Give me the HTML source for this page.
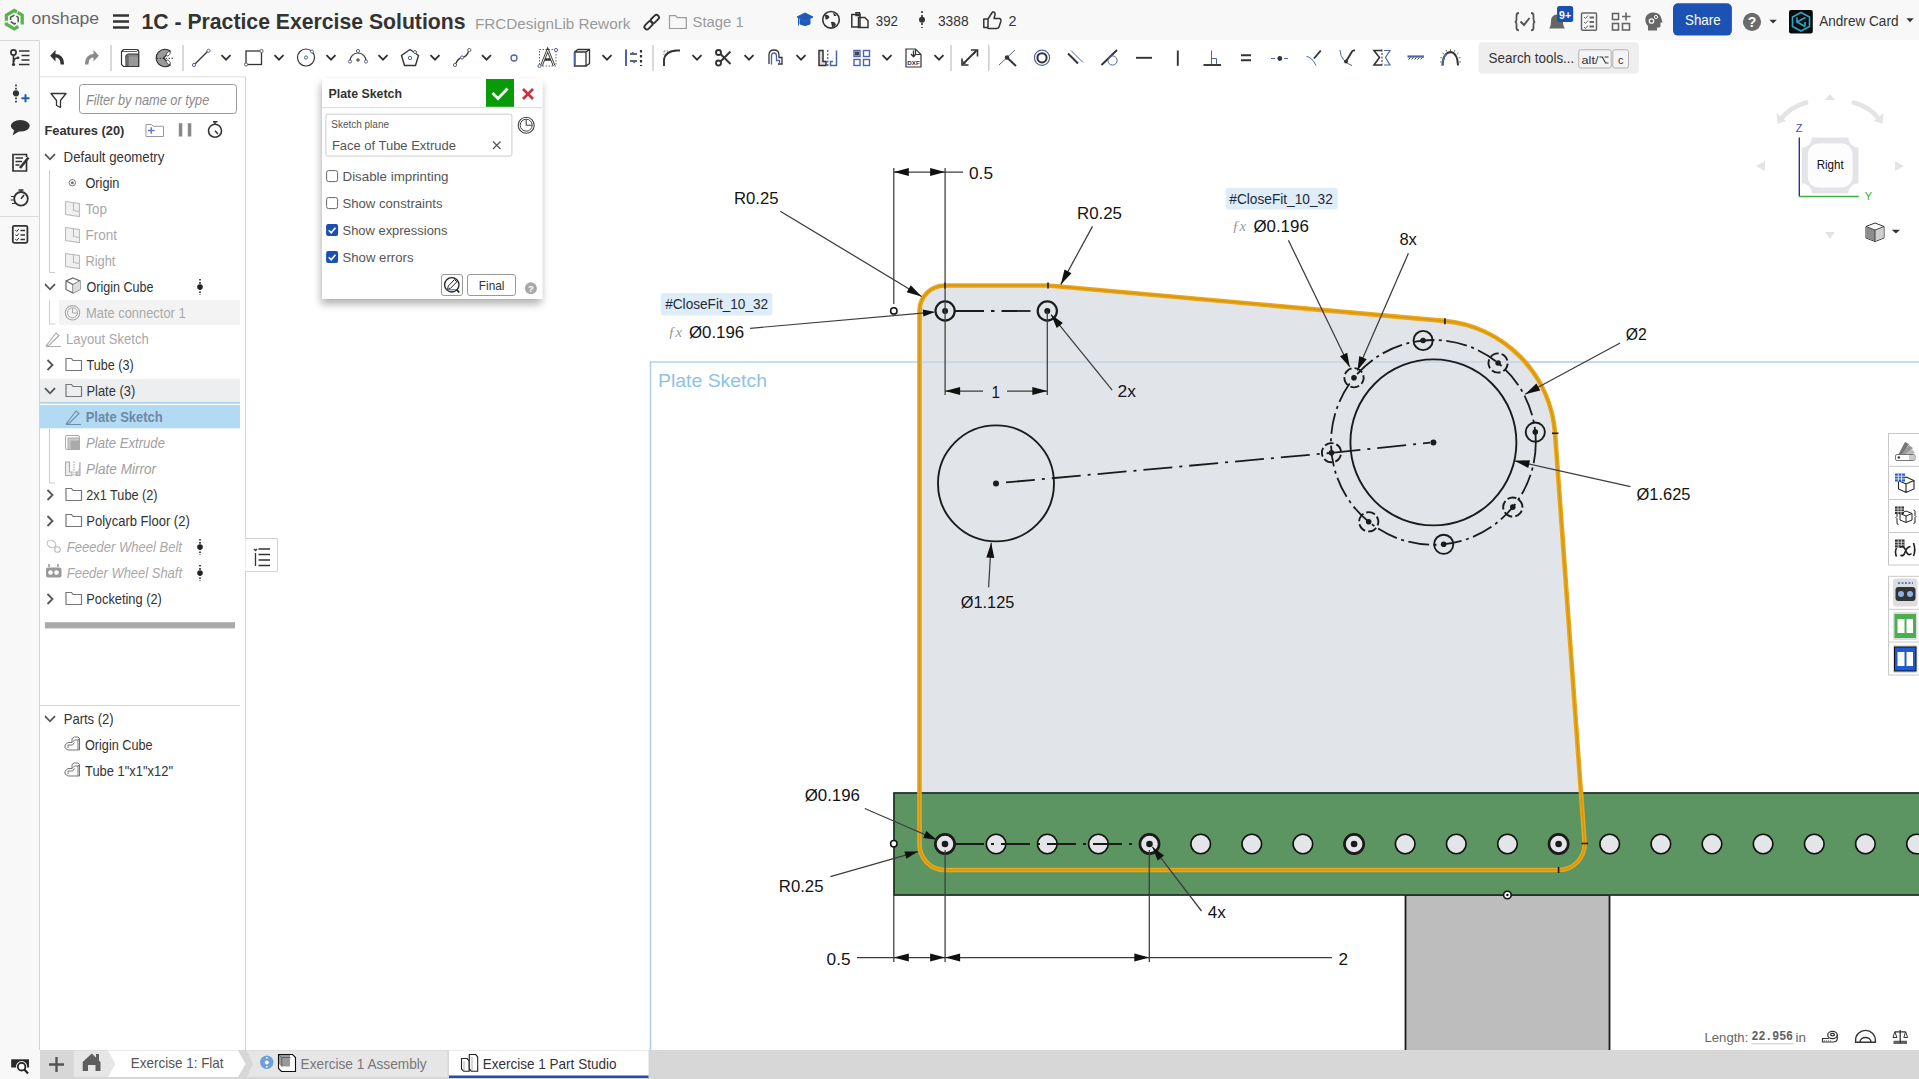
<!DOCTYPE html>
<html><head><meta charset="utf-8"><title>Onshape</title>
<style>html,body{margin:0;padding:0;background:#fff;overflow:hidden}svg{display:block}text{font-family:"Liberation Sans",sans-serif}</style>
</head><body>
<svg width="1919" height="1079" viewBox="0 0 1919 1079" font-family="Liberation Sans">
<rect x="0" y="0" width="1919" height="1079" fill="#ffffff"/>
<rect x="0" y="0" width="1919" height="40" fill="#f8f8f8"/>
<rect x="0" y="40" width="40" height="1039" fill="#f8f8f8"/>
<path d="M0 40.5 H39.5 V77" fill="none" stroke="#d6d6d6"/>
<g id="viewport"><path d="M650.5 1050 V362 H1919" fill="none" stroke="#afd3ec" stroke-width="1.7"/>
<text x="658" y="386.5" font-size="18" fill="#8cc3e8" textLength="109" lengthAdjust="spacingAndGlyphs">Plate Sketch</text>
<path d="M919.5 311 A25.5 25.5 0 0 1 945 285.5 L1048 285.5 L1444.25 320.88 A122 122 0 0 1 1555.08 433.63 L1584.53 842.13 A26 26 0 0 1 1558.6 870 L945 870 A25.5 25.5 0 0 1 919.5 844.5 Z" fill="#e1e4e8"/>
<path d="M919 362 H1590" stroke="#c5d6e3" stroke-width="1.3"/>
<rect x="1405.5" y="895" width="204" height="160" fill="#bdbdbd" stroke="#1b1b1b" stroke-width="1.8"/>
<rect x="894" y="793" width="1030" height="102" fill="#5c9562" stroke="#22362a" stroke-width="1.8"/>
<circle cx="945.0" cy="844" r="9.8" fill="#e3e5e9" stroke="#111" stroke-width="1.6"/>
<circle cx="996.1" cy="844" r="9.8" fill="#e3e5e9" stroke="#111" stroke-width="1.6"/>
<circle cx="1047.3" cy="844" r="9.8" fill="#e3e5e9" stroke="#111" stroke-width="1.6"/>
<circle cx="1098.4" cy="844" r="9.8" fill="#e3e5e9" stroke="#111" stroke-width="1.6"/>
<circle cx="1149.5" cy="844" r="9.8" fill="#e3e5e9" stroke="#111" stroke-width="1.6"/>
<circle cx="1200.7" cy="844" r="9.8" fill="#e3e5e9" stroke="#111" stroke-width="1.6"/>
<circle cx="1251.8" cy="844" r="9.8" fill="#e3e5e9" stroke="#111" stroke-width="1.6"/>
<circle cx="1302.9" cy="844" r="9.8" fill="#e3e5e9" stroke="#111" stroke-width="1.6"/>
<circle cx="1354.1" cy="844" r="9.8" fill="#e3e5e9" stroke="#111" stroke-width="1.6"/>
<circle cx="1405.2" cy="844" r="9.8" fill="#e3e5e9" stroke="#111" stroke-width="1.6"/>
<circle cx="1456.3" cy="844" r="9.8" fill="#e3e5e9" stroke="#111" stroke-width="1.6"/>
<circle cx="1507.5" cy="844" r="9.8" fill="#e3e5e9" stroke="#111" stroke-width="1.6"/>
<circle cx="1558.6" cy="844" r="9.8" fill="#e3e5e9" stroke="#111" stroke-width="1.6"/>
<circle cx="1609.7" cy="844" r="9.8" fill="#e3e5e9" stroke="#111" stroke-width="1.6"/>
<circle cx="1660.9" cy="844" r="9.8" fill="#e3e5e9" stroke="#111" stroke-width="1.6"/>
<circle cx="1712.0" cy="844" r="9.8" fill="#e3e5e9" stroke="#111" stroke-width="1.6"/>
<circle cx="1763.1" cy="844" r="9.8" fill="#e3e5e9" stroke="#111" stroke-width="1.6"/>
<circle cx="1814.3" cy="844" r="9.8" fill="#e3e5e9" stroke="#111" stroke-width="1.6"/>
<circle cx="1865.4" cy="844" r="9.8" fill="#e3e5e9" stroke="#111" stroke-width="1.6"/>
<circle cx="1916.5" cy="844" r="9.8" fill="#e3e5e9" stroke="#111" stroke-width="1.6"/>
<circle cx="893.8" cy="843.8" r="3.2" fill="#fff" stroke="#111" stroke-width="1.5"/>
<circle cx="1507.4" cy="895" r="3.8" fill="#fff" stroke="#111" stroke-width="1.6"/>
<circle cx="1507.4" cy="895" r="1.2" fill="#111"/>
<path d="M955 844 H1139" stroke="#1b1b1b" stroke-width="1.8" stroke-dasharray="29 7 3 7"/>
<circle cx="945.0" cy="844" r="9.6" fill="none" stroke="#1b1b1b" stroke-width="2.6"/>
<circle cx="945.0" cy="844" r="3.3" fill="#1b1b1b"/>
<circle cx="1149.5" cy="844" r="9.6" fill="none" stroke="#1b1b1b" stroke-width="2.6"/>
<circle cx="1149.5" cy="844" r="3.3" fill="#1b1b1b"/>
<circle cx="1354.1" cy="844" r="9.6" fill="none" stroke="#1b1b1b" stroke-width="2.6"/>
<circle cx="1354.1" cy="844" r="3.3" fill="#1b1b1b"/>
<circle cx="1558.6" cy="844" r="9.6" fill="none" stroke="#1b1b1b" stroke-width="2.6"/>
<circle cx="1558.6" cy="844" r="3.3" fill="#1b1b1b"/>
<path d="M919.5 311 A25.5 25.5 0 0 1 945 285.5 L1048 285.5 L1444.25 320.88 A122 122 0 0 1 1555.08 433.63 L1584.53 842.13 A26 26 0 0 1 1558.6 870 L945 870 A25.5 25.5 0 0 1 919.5 844.5 Z" fill="none" stroke="#e8a61e" stroke-width="4.6"/>
<path d="M919.5 311 A25.5 25.5 0 0 1 945 285.5 L1048 285.5 L1444.25 320.88 A122 122 0 0 1 1555.08 433.63 L1584.53 842.13 A26 26 0 0 1 1558.6 870 L945 870 A25.5 25.5 0 0 1 919.5 844.5 Z" fill="none" stroke="#d99604" stroke-width="1.4"/>
<path d="M1048 282.5 V288.5" stroke="#1b1b1b" stroke-width="1.6"/>
<path d="M1444.9 318.2 V324.2" stroke="#1b1b1b" stroke-width="1.6"/>
<path d="M1558.6 867 V873" stroke="#1b1b1b" stroke-width="1.6"/>
<path d="M945 282.5 V288.5" stroke="#1b1b1b" stroke-width="1.6"/>
<path d="M1552 433.3 H1558.5" stroke="#1b1b1b" stroke-width="1.6"/>
<path d="M1581.6 843.5 H1588.1" stroke="#1b1b1b" stroke-width="1.6"/>
<circle cx="945.1" cy="311" r="9.6" fill="none" stroke="#1b1b1b" stroke-width="2.2"/>
<circle cx="945.1" cy="311" r="3" fill="#1b1b1b"/>
<circle cx="1047.3" cy="311" r="9.6" fill="none" stroke="#1b1b1b" stroke-width="2.2"/>
<circle cx="1047.3" cy="311" r="3" fill="#1b1b1b"/>
<path d="M955 311 H1037" stroke="#1b1b1b" stroke-width="1.8" stroke-dasharray="29 7 3.5 7"/>
<circle cx="1433.4" cy="442.4" r="83" fill="none" stroke="#1b1b1b" stroke-width="1.9"/>
<circle cx="1433.4" cy="442.4" r="3" fill="#1b1b1b"/>
<circle cx="1433.4" cy="442.4" r="102.4" fill="none" stroke="#1b1b1b" stroke-width="1.8" stroke-dasharray="21 4.5 3 4.5"/>
<circle cx="1535.3" cy="432.1" r="9.6" fill="none" stroke="#1b1b1b" stroke-width="1.9"/>
<circle cx="1535.3" cy="432.1" r="2.8" fill="#1b1b1b"/>
<circle cx="1498.1" cy="363.0" r="9.6" fill="none" stroke="#1b1b1b" stroke-width="1.9" stroke-dasharray="9 3" transform="rotate(-140.8 1498.1 363.0)"/>
<circle cx="1498.1" cy="363.0" r="2.8" fill="#1b1b1b"/>
<circle cx="1423.1" cy="340.5" r="9.6" fill="none" stroke="#1b1b1b" stroke-width="1.9"/>
<circle cx="1423.1" cy="340.5" r="2.8" fill="#1b1b1b"/>
<circle cx="1354.0" cy="377.7" r="9.6" fill="none" stroke="#1b1b1b" stroke-width="1.9" stroke-dasharray="9 3" transform="rotate(-230.8 1354.0 377.7)"/>
<circle cx="1354.0" cy="377.7" r="2.8" fill="#1b1b1b"/>
<circle cx="1331.5" cy="452.7" r="9.6" fill="none" stroke="#1b1b1b" stroke-width="1.9" stroke-dasharray="9 3" transform="rotate(-275.8 1331.5 452.7)"/>
<circle cx="1331.5" cy="452.7" r="2.8" fill="#1b1b1b"/>
<circle cx="1368.7" cy="521.8" r="9.6" fill="none" stroke="#1b1b1b" stroke-width="1.9" stroke-dasharray="9 3" transform="rotate(-320.8 1368.7 521.8)"/>
<circle cx="1368.7" cy="521.8" r="2.8" fill="#1b1b1b"/>
<circle cx="1443.7" cy="544.3" r="9.6" fill="none" stroke="#1b1b1b" stroke-width="1.9"/>
<circle cx="1443.7" cy="544.3" r="2.8" fill="#1b1b1b"/>
<circle cx="1512.8" cy="507.1" r="9.6" fill="none" stroke="#1b1b1b" stroke-width="1.9" stroke-dasharray="9 3" transform="rotate(-410.8 1512.8 507.1)"/>
<circle cx="1512.8" cy="507.1" r="2.8" fill="#1b1b1b"/>
<circle cx="996" cy="483.4" r="58" fill="none" stroke="#1b1b1b" stroke-width="1.9"/>
<circle cx="996" cy="483.4" r="3" fill="#1b1b1b"/>
<path d="M1006 482.4 L1331.5 452.8" stroke="#1b1b1b" stroke-width="1.8" stroke-dasharray="29 7 3 7"/>
<path d="M1331.5 452.8 L1430 442.7" stroke="#1b1b1b" stroke-width="1.8" stroke-dasharray="29 7 3 7"/>
<path d="M893.8 168 L893.8 304" stroke="#3c3c3c" stroke-width="1.25" fill="none"/>
<path d="M945.1 168 L945.1 395" stroke="#3c3c3c" stroke-width="1.25" fill="none"/>
<path d="M893.8 172 L963 172" stroke="#3c3c3c" stroke-width="1.25" fill="none"/>
<path d="M893.8 172.0 L908.8 168.0 L908.8 176.0 Z" fill="#111"/>
<path d="M945.1 172.0 L930.1 176.0 L930.1 168.0 Z" fill="#111"/>
<circle cx="893.8" cy="310.9" r="3.2" fill="#fff" stroke="#111" stroke-width="1.5"/>
<text x="969" y="178.7" font-size="16.5" fill="#141414" textLength="24" lengthAdjust="spacingAndGlyphs">0.5</text>
<path d="M780.3 211.2 L921.6 296.5" stroke="#3c3c3c" stroke-width="1.25" fill="none"/>
<path d="M921.6 296.5 L906.7 292.2 L910.8 285.3 Z" fill="#111"/>
<text x="734" y="203.8" font-size="16.5" fill="#141414" textLength="44.5" lengthAdjust="spacingAndGlyphs">R0.25</text>
<path d="M750.1 328.3 L933.6 312.2" stroke="#3c3c3c" stroke-width="1.2" fill="none"/>
<path d="M935.0 312.0 L923.4 316.5 L922.7 309.6 Z" fill="#111"/>
<path d="M1047.3 311 L1047.3 395" stroke="#3c3c3c" stroke-width="1.25" fill="none"/>
<path d="M945.1 391 L983 391" stroke="#3c3c3c" stroke-width="1.25" fill="none"/>
<path d="M1007 391 L1047.3 391" stroke="#3c3c3c" stroke-width="1.25" fill="none"/>
<path d="M945.1 391.0 L960.1 387.0 L960.1 395.0 Z" fill="#111"/>
<path d="M1047.3 391.0 L1032.3 395.0 L1032.3 387.0 Z" fill="#111"/>
<text x="991.5" y="397.5" font-size="16.5" fill="#141414" textLength="8.5" lengthAdjust="spacingAndGlyphs">1</text>
<path d="M1112.2 390.1 L1051 314.6" stroke="#3c3c3c" stroke-width="1.25" fill="none"/>
<path d="M1051.0 314.6 L1062.9 323.0 L1056.7 328.0 Z" fill="#111"/>
<text x="1117.5" y="397.1" font-size="16.5" fill="#141414" textLength="18.4" lengthAdjust="spacingAndGlyphs">2x</text>
<path d="M1092.5 226.4 L1060.8 284.6" stroke="#3c3c3c" stroke-width="1.25" fill="none"/>
<path d="M1060.8 284.6 L1064.5 269.5 L1071.5 273.3 Z" fill="#111"/>
<text x="1077" y="219" font-size="16.5" fill="#141414" textLength="45" lengthAdjust="spacingAndGlyphs">R0.25</text>
<path d="M1288.4 240.2 L1349.7 367.1" stroke="#3c3c3c" stroke-width="1.25" fill="none"/>
<path d="M1349.7 367.1 L1340.0 356.2 L1347.2 352.8 Z" fill="#111"/>
<text x="1253.4" y="231.9" font-size="17" fill="#141414" textLength="55.4" lengthAdjust="spacingAndGlyphs">Ø0.196</text>
<path d="M1408.4 253.3 L1357.4 370.4" stroke="#3c3c3c" stroke-width="1.25" fill="none"/>
<path d="M1357.4 370.4 L1359.3 356.0 L1366.7 359.2 Z" fill="#111"/>
<text x="1399.4" y="245.2" font-size="16.5" fill="#141414" textLength="17.5" lengthAdjust="spacingAndGlyphs">8x</text>
<path d="M1620.1 343 L1525.1 394.2" stroke="#3c3c3c" stroke-width="1.25" fill="none"/>
<path d="M1525.1 394.2 L1536.4 383.6 L1540.2 390.6 Z" fill="#111"/>
<text x="1625.8" y="340.3" font-size="17" fill="#141414" textLength="21" lengthAdjust="spacingAndGlyphs">Ø2</text>
<path d="M1630.4 486.6 L1514.5 460.8" stroke="#3c3c3c" stroke-width="1.25" fill="none"/>
<path d="M1514.5 460.8 L1530.0 460.2 L1528.3 468.0 Z" fill="#111"/>
<text x="1636.5" y="499.9" font-size="17" fill="#141414" textLength="54" lengthAdjust="spacingAndGlyphs">Ø1.625</text>
<path d="M988.6 587.2 L991.2 542.7" stroke="#3c3c3c" stroke-width="1.25" fill="none"/>
<path d="M991.2 542.7 L994.3 557.9 L986.3 557.4 Z" fill="#111"/>
<text x="960.8" y="608.3" font-size="17" fill="#141414" textLength="53.5" lengthAdjust="spacingAndGlyphs">Ø1.125</text>
<path d="M864.8 808.5 L936.7 839.7" stroke="#3c3c3c" stroke-width="1.25" fill="none"/>
<path d="M936.7 839.7 L923.3 838.0 L926.3 831.0 Z" fill="#111"/>
<text x="804.7" y="800.6" font-size="17" fill="#141414" textLength="55.3" lengthAdjust="spacingAndGlyphs">Ø0.196</text>
<path d="M830.4 876.6 L917.9 851.6" stroke="#3c3c3c" stroke-width="1.25" fill="none"/>
<path d="M917.9 851.6 L906.4 858.8 L904.4 851.5 Z" fill="#111"/>
<text x="778.8" y="892" font-size="16.5" fill="#141414" textLength="44.7" lengthAdjust="spacingAndGlyphs">R0.25</text>
<path d="M1201.5 911 L1152.4 846.9" stroke="#3c3c3c" stroke-width="1.25" fill="none"/>
<path d="M1152.4 846.9 L1164.1 855.6 L1157.7 860.4 Z" fill="#111"/>
<text x="1207.8" y="917.9" font-size="16.5" fill="#141414" textLength="18" lengthAdjust="spacingAndGlyphs">4x</text>
<path d="M893.8 895 L893.8 962" stroke="#3c3c3c" stroke-width="1.25" fill="none"/>
<path d="M945.1 850 L945.1 962" stroke="#3c3c3c" stroke-width="1.25" fill="none"/>
<path d="M1149.3 850 L1149.3 962" stroke="#3c3c3c" stroke-width="1.25" fill="none"/>
<path d="M857 957.6 L1332 957.6" stroke="#3c3c3c" stroke-width="1.25" fill="none"/>
<path d="M893.8 957.6 L908.8 953.6 L908.8 961.6 Z" fill="#111"/>
<path d="M945.1 957.6 L930.1 961.6 L930.1 953.6 Z" fill="#111"/>
<path d="M945.1 957.6 L960.1 953.6 L960.1 961.6 Z" fill="#111"/>
<path d="M1149.3 957.6 L1134.3 961.6 L1134.3 953.6 Z" fill="#111"/>
<text x="826.6" y="964.8" font-size="16.5" fill="#141414" textLength="24" lengthAdjust="spacingAndGlyphs">0.5</text>
<text x="1338.5" y="964.8" font-size="16.5" fill="#141414" textLength="9.5" lengthAdjust="spacingAndGlyphs">2</text>
<rect x="660.8" y="293.1" width="111.6" height="22.3" rx="3" fill="#deedf8"/>
<text x="665.2" y="309.4" font-size="14" fill="#1d2a38" textLength="103" lengthAdjust="spacingAndGlyphs">#CloseFit_10_32</text>
<text x="668" y="337" font-size="15" fill="#999" style="font-family:Liberation Serif" font-style="italic">ƒx</text>
<text x="688.9" y="337.6" font-size="17" fill="#141414" textLength="55.3" lengthAdjust="spacingAndGlyphs">Ø0.196</text>
<rect x="1225.6" y="187.7" width="112.1" height="21.8" rx="3" fill="#deedf8"/>
<text x="1229.3" y="203.6" font-size="14" fill="#1d2a38" textLength="103.5" lengthAdjust="spacingAndGlyphs">#CloseFit_10_32</text>
<text x="1232" y="231" font-size="15" fill="#999" style="font-family:Liberation Serif" font-style="italic">ƒx</text></g>
<g fill="none" stroke-linejoin="miter" stroke-linecap="butt"><path d="M6.4 20.8 V15.1 L14.3 10.5 L16.9 12" stroke="#55b74a" stroke-width="3.3"/><path d="M17.6 12.4 L22.2 15.1 V24.6" stroke="#55b74a" stroke-width="3.3"/><path d="M6.4 22.6 V24.3 L14.3 28.9 L18.4 26.5" stroke="#55b74a" stroke-width="3.3"/><path d="M10.6 20 V17.3 L14.4 15.1" stroke="#555" stroke-width="1.5"/><path d="M16.4 16.2 L18.2 17.3 V22.3" stroke="#555" stroke-width="1.5"/><path d="M10.6 21.6 L14.3 24 L15.9 23.1" stroke="#555" stroke-width="1.5"/></g>
<text x="31.5" y="24.3" font-size="16.5" fill="#666666" textLength="67.5" lengthAdjust="spacingAndGlyphs">onshape</text>
<path d="M113 15.5 H129 M113 21.5 H129 M113 27.5 H129" stroke="#333" stroke-width="2.6"/>
<text x="141.5" y="28.75" font-size="22" fill="#333" font-weight="bold" textLength="324" lengthAdjust="spacingAndGlyphs">1C - Practice Exercise Solutions</text>
<text x="474.9" y="28.9" font-size="15" fill="#9a9a9a" textLength="155.5" lengthAdjust="spacingAndGlyphs">FRCDesignLib Rework</text>
<g transform="rotate(-45 651.7 22.1)" fill="none" stroke="#333" stroke-width="1.9"><rect x="642.5" y="19.6" width="9.5" height="5" rx="2.5"/><rect x="651.4" y="19.6" width="9.5" height="5" rx="2.5"/></g>
<path d="M669.5 28.5 V15.7 H675.5 L677.3 17.6 H686.3 V28.5 Z" fill="none" stroke="#9a9a9a" stroke-width="1.2"/>
<text x="692.5" y="27.4" font-size="15.5" fill="#9a9a9a" textLength="51.2" lengthAdjust="spacingAndGlyphs">Stage 1</text>
<path d="M797 17 L805 13 L813 17 L805 21 Z M800 19 V24 Q805 27 810 24 V19 L805 21.5 Z M798.5 18 V25.5" fill="#1e5bb8" stroke="#1e5bb8" stroke-width="1"/>
<circle cx="831" cy="19.8" r="8.3" fill="none" stroke="#333" stroke-width="1.6"/><path d="M825 15 Q828 14 829.5 17 Q828 20 825.5 19.5 Z M831 22 Q835 21 836 24.5 Q834 27.5 832 27 Z M833 12.5 Q836 14 836.5 16 L834 16 Z" fill="#333"/>
<g fill="none" stroke="#333" stroke-width="1.5"><path d="M854 14.5 H860 V27 H851.8 V14.5 Z"/><path d="M856 12.8 H859.5 V15.5 H856 Z"/><path d="M858.5 17.5 H864.8 L868 20.7 V27.5 H858.5 Z"/></g>
<text x="875.8" y="25.7" font-size="14.4" fill="#333" textLength="22.2" lengthAdjust="spacingAndGlyphs">392</text>
<path d="M922 11 V28" stroke="#333" stroke-width="1.6" stroke-dasharray="2 2"/><circle cx="922" cy="19.7" r="3" fill="#333"/>
<text x="937.9" y="25.7" font-size="14.4" fill="#333" textLength="30.7" lengthAdjust="spacingAndGlyphs">3388</text>
<path d="M983.8 19 H988 L992.5 12 Q995.5 11.5 995 15 L994 18.5 H999.5 Q1001.5 19 1000.8 21.5 L999 27 Q998.5 28.5 996.5 28.5 H988 L987.5 27.5 H983.8 Z M988 19 V27.5" fill="none" stroke="#333" stroke-width="1.5" stroke-linejoin="round"/>
<text x="1008.6" y="25.7" font-size="14.4" fill="#333">2</text>
<path d="M1519 13 Q1516.5 13 1516.5 15.5 V19.5 Q1516.5 21.5 1515 21.8 Q1516.5 22.2 1516.5 24 V28 Q1516.5 30.3 1519 30.3 M1531 13 Q1533.5 13 1533.5 15.5 V19.5 Q1533.5 21.5 1535 21.8 Q1533.5 22.2 1533.5 24 V28 Q1533.5 30.3 1531 30.3" fill="none" stroke="#555" stroke-width="1.8"/>
<path d="M1520.5 21.5 L1524 25 L1529.5 18" fill="none" stroke="#555" stroke-width="2"/>
<path d="M1549 28.5 Q1551 26.5 1551 21 Q1551 15 1557 14.5 Q1563 15 1563 21 Q1563 26.5 1565 28.5 Z" fill="#666"/>
<rect x="1557" y="6" width="16.2" height="16" rx="2.5" fill="#1a50b0"/>
<text x="1565.1" y="18.6" font-size="10.5" fill="#fff" font-weight="bold" text-anchor="middle">9+</text>
<g fill="none" stroke="#666" stroke-width="1.5"><rect x="1581.5" y="13" width="15" height="17.3" rx="1"/><path d="M1584 17 l1.5 1.5 l2.5 -3 M1584 22 l1.5 1.5 l2.5 -3 M1584 27 l1.5 1.5 l2.5 -3" stroke-width="1"/><path d="M1589.5 17.5 H1594 M1589.5 22 H1594 M1589.5 26.5 H1594" stroke-width="1.8"/></g>
<g fill="none" stroke="#666" stroke-width="1.6"><rect x="1612.5" y="13.5" width="6" height="6"/><rect x="1612.5" y="23.5" width="6" height="6.5"/><rect x="1622.5" y="23.5" width="7" height="6.5"/><path d="M1626 12.5 V20.5 M1622 16.5 H1630.5"/></g>
<path d="M1648 30.5 V26 Q1644.5 22.5 1645.5 18 Q1647 12.5 1653.5 12.5 Q1660.5 12.5 1661.5 19 L1662.5 22.5 H1660.5 V26.5 Q1660 28 1657 27.5 V30.5 Z" fill="#666"/><circle cx="1651.5" cy="21" r="2.2" fill="none" stroke="#f8f8f8" stroke-width="1.3"/><circle cx="1656" cy="17" r="1.6" fill="none" stroke="#f8f8f8" stroke-width="1"/>
<rect x="1673" y="3.2" width="58.9" height="32.4" rx="5" fill="#1c52b3"/>
<text x="1685" y="25" font-size="14.8" fill="#fff" textLength="35.6" lengthAdjust="spacingAndGlyphs">Share</text>
<circle cx="1752" cy="21.9" r="9.1" fill="#6b6b6b"/>
<text x="1752" y="26.8" font-size="14" fill="#fff" font-weight="bold" text-anchor="middle">?</text>
<path d="M1769.4 19.7 H1776.8 L1773.1 23.6 Z" fill="#333"/>
<rect x="1789" y="9.9" width="23.8" height="23.6" rx="2" fill="#0b0b0b"/><path d="M1801 12.5 L1809.5 17 V26.5 L1801 31 L1792.5 26.5 V17 Z" fill="none" stroke="#29a9c9" stroke-width="1.6"/><path d="M1805.5 17.5 L1797 22 L1805 26.5 M1797 17.5 V22 M1805 22 V26.5" fill="none" stroke="#29a9c9" stroke-width="1.6"/>
<text x="1819.2" y="25.8" font-size="14" fill="#333" textLength="79.3" lengthAdjust="spacingAndGlyphs">Andrew Card</text>
<path d="M1906.4 18.2 H1913.7 L1910 22.2 Z" fill="#333"/>
<g fill="none" stroke="#333" stroke-width="1.7"><circle cx="13.5" cy="52.5" r="2.6"/><path d="M13.5 55 V65"/><path d="M13.5 62 Q13.5 58.5 17.5 58"/><path d="M19 51 H29.5 M21.5 55.5 H29.5 M21.5 60 H29.5 M19 64.5 H29.5" stroke-width="1.6"/></g><circle cx="13.5" cy="64.5" r="1.6" fill="#333"/><circle cx="18" cy="57.8" r="1.4" fill="#333"/>
<path d="M50.2 55.8 L55.5 50 V61.6 Z" fill="#333"/><path d="M54 55.8 Q62.3 55.3 62.3 64.5" fill="none" stroke="#333" stroke-width="3.4"/>
<path d="M98.8 55.8 L93.5 50 V61.6 Z" fill="#8a8a8a"/><path d="M95 55.8 Q86.7 55.3 86.7 64.5" fill="none" stroke="#8a8a8a" stroke-width="3.4"/>
<path d="M111 45 V71" stroke="#cccccc" stroke-width="1.5"/>
<path d="M121.5 51.5 L123.5 49.5 H137 L138.8 51.3 V66.5 H123.5 L121.5 64.5 Z" fill="#fff" stroke="#333" stroke-width="1.2"/><path d="M121.5 51.5 H136.5 L138.8 49.6" fill="none" stroke="#333" stroke-width="0.8"/><path d="M125.8 55.8 L127.5 54 H138.3 V66.2 H126 Z" fill="#888" stroke="#333" stroke-width="1"/><path d="M128 56.5 H138 V66 H128 Z" fill="#999"/><path d="M125.8 55.8 H128 V66" fill="none" stroke="#444" stroke-width="0.8"/>
<path d="M170.3 51 A8.8 8.8 0 1 0 170.3 65 L163.5 58 Z" fill="#9a9a9a" stroke="#2a2a2a" stroke-width="1.1" stroke-linejoin="round"/><ellipse cx="168.3" cy="53.8" rx="1.5" ry="2.6" fill="#fff" stroke="#333" stroke-width="0.7" transform="rotate(40 168.3 53.8)"/><ellipse cx="168.3" cy="62.2" rx="1.5" ry="2.6" fill="#fff" stroke="#333" stroke-width="0.7" transform="rotate(-40 168.3 62.2)"/><path d="M156.5 58.3 H173" stroke="#222" stroke-width="0.9" stroke-dasharray="1.6 1.4"/>
<path d="M183 45 V71" stroke="#cccccc" stroke-width="1.5"/>
<path d="M194 65 L208 51" stroke="#333" stroke-width="1.3"/><circle cx="194" cy="65" r="1.6" fill="#fff" stroke="#5a6684" stroke-width="1"/><circle cx="208.5" cy="50.8" r="1.6" fill="#fff" stroke="#5a6684" stroke-width="1"/>
<path d="M221.5 55.2 L226 59.7 L230.5 55.2" fill="none" stroke="#333" stroke-width="1.9"/>
<rect x="246" y="51" width="15.5" height="13.5" fill="none" stroke="#333" stroke-width="1.3"/><circle cx="261.5" cy="51" r="1.6" fill="#fff" stroke="#5a6684"/><circle cx="246" cy="64.5" r="1.6" fill="#fff" stroke="#5a6684"/>
<path d="M274.5 55.2 L279 59.7 L283.5 55.2" fill="none" stroke="#333" stroke-width="1.9"/>
<circle cx="306" cy="57.5" r="8.5" fill="none" stroke="#333" stroke-width="1.2"/><circle cx="306" cy="57.5" r="1.6" fill="none" stroke="#4a66a8"/><circle cx="312" cy="51.5" r="1.5" fill="#fff" stroke="#5a6684"/>
<path d="M326.5 55.2 L331 59.7 L335.5 55.2" fill="none" stroke="#333" stroke-width="1.9"/>
<path d="M350 61 A8 8 0 0 1 366 61" fill="none" stroke="#333" stroke-width="1.2"/><circle cx="350" cy="61.5" r="1.6" fill="#fff" stroke="#5a6684"/><circle cx="366" cy="61.5" r="1.6" fill="#fff" stroke="#5a6684"/><circle cx="358" cy="51" r="1.6" fill="#fff" stroke="#5a6684"/><path d="M356 60 H360 M358 58 V62" stroke="#333"/>
<path d="M378.5 55.2 L383 59.7 L387.5 55.2" fill="none" stroke="#333" stroke-width="1.9"/>
<path d="M410 49.5 L418.5 55.5 L415.5 65.5 H404.5 L401.5 55.5 Z" fill="none" stroke="#333" stroke-width="1.4"/><circle cx="410" cy="58" r="1.7" fill="none" stroke="#4a66a8"/><circle cx="415" cy="52" r="1.5" fill="#fff" stroke="#5a6684"/>
<path d="M430.5 55.2 L435 59.7 L439.5 55.2" fill="none" stroke="#333" stroke-width="1.9"/>
<path d="M455 65 Q458 58 462 57.5 Q467 57 469 50" fill="none" stroke="#333" stroke-width="1.3"/><circle cx="455" cy="65" r="1.6" fill="#fff" stroke="#5a6684"/><circle cx="462" cy="57.5" r="1.6" fill="#fff" stroke="#5a6684"/><circle cx="469.3" cy="50" r="1.6" fill="#fff" stroke="#5a6684"/>
<path d="M482.0 55.2 L486.5 59.7 L491.0 55.2" fill="none" stroke="#333" stroke-width="1.9"/>
<circle cx="514" cy="58" r="3" fill="none" stroke="#4a66a8" stroke-width="1.3"/>
<rect x="539.5" y="49.5" width="16.5" height="16.5" fill="none" stroke="#555" stroke-width="0.9" stroke-dasharray="1.5 1.5"/><path d="M541.5 65.5 L547.7 50 L554 65.5 M544 59.5 H551.5" fill="none" stroke="#333" stroke-width="2.6"/><path d="M541.5 65.5 L547.7 50 L554 65.5" fill="none" stroke="#fff" stroke-width="0.9"/><circle cx="556" cy="50" r="1.6" fill="#fff" stroke="#5a6684"/><circle cx="539.5" cy="66" r="1.6" fill="#fff" stroke="#5a6684"/>
<path d="M574.5 52 L578 49.5 H589.5 V63.5 L586 66 H574.5 Z M574.5 52 H586 V66 M586 52 L589.5 49.5" fill="none" stroke="#333" stroke-width="1.3"/><path d="M574.8 52.5 V65" stroke="#4a66a8" stroke-width="2"/>
<path d="M602.5 55.2 L607 59.7 L611.5 55.2" fill="none" stroke="#333" stroke-width="1.9"/>
<path d="M626 49.5 V66" stroke="#4a66a8" stroke-width="2"/><path d="M630 54 H637 M630 61 H637" stroke="#333" stroke-width="1.3"/><path d="M631 54 l2.5 -2 M636 61 l-2.5 2" stroke="#4a66a8" stroke-width="1.3"/><path d="M641 50 V66" stroke="#333" stroke-width="2.2" stroke-dasharray="2.5 2.5"/>
<path d="M653 45 V71" stroke="#cccccc" stroke-width="1.5"/>
<path d="M664 66 V60 Q665 51 677 50.5 H680" fill="none" stroke="#333" stroke-width="1.9"/><path d="M664 51 H669 M664 51 V56" stroke="#777" stroke-width="0.9" stroke-dasharray="1.5 1.2"/>
<path d="M692.5 55.2 L697 59.7 L701.5 55.2" fill="none" stroke="#333" stroke-width="1.9"/>
<g fill="none" stroke="#333" stroke-width="1.9"><circle cx="718.5" cy="63" r="2.5"/><circle cx="718.5" cy="52.5" r="2.5"/><path d="M720.5 61.5 L730.5 51.5 M720.5 54 L730.5 64"/></g>
<path d="M744.5 55.2 L749 59.7 L753.5 55.2" fill="none" stroke="#333" stroke-width="1.9"/>
<path d="M769 64 V55 Q769 50 774 50 Q779 50 779 55 V57.5 H782 V64 H778" fill="none" stroke="#333" stroke-width="1.3"/><path d="M771.5 64.5 V56 Q771.5 53 774 53 Q776.5 53 776.5 56 V60.5 H779.5 V64.5" fill="none" stroke="#4a66a8" stroke-width="1.3"/>
<path d="M796.5 55.2 L801 59.7 L805.5 55.2" fill="none" stroke="#333" stroke-width="1.9"/>
<path d="M819 50.5 H823 V61.5 H826 V65.5 H819 Z" fill="#ddd" stroke="#333" stroke-width="1.5"/><path d="M827.8 50 V66" stroke="#333" stroke-width="1" stroke-dasharray="2 1.5"/><path d="M836.5 50.5 V65.5 H830.5 V61.5 H833" fill="none" stroke="#4a66a8" stroke-width="1.5"/>
<g fill="none" stroke="#4a66a8" stroke-width="1.4"><rect x="854" y="50.5" width="6" height="6"/><rect x="863.5" y="50.5" width="6" height="6"/><rect x="854" y="59.5" width="6" height="6"/><rect x="863.5" y="59.5" width="6" height="6"/></g><rect x="855" y="51.5" width="4" height="4" fill="#444"/>
<path d="M882.5 55.2 L887 59.7 L891.5 55.2" fill="none" stroke="#333" stroke-width="1.9"/>
<path d="M906 49 H915.5 L921 54.5 V67 H906 Z M915.5 49 V54.5 H921" fill="none" stroke="#333" stroke-width="1.2"/><path d="M913.5 50.5 V56.5 M911 54 L913.5 56.8 L916 54" fill="none" stroke="#333" stroke-width="1.3"/>
<text x="913.5" y="64.8" font-size="6.2" fill="#333" font-weight="bold" text-anchor="middle">DXF</text>
<path d="M934.5 55.2 L939 59.7 L943.5 55.2" fill="none" stroke="#333" stroke-width="1.9"/>
<path d="M951 45 V71" stroke="#cccccc" stroke-width="1.5"/>
<path d="M963 64 L976.5 50.5" stroke="#333" stroke-width="1.8"/><path d="M962 58.5 V65 H968.5 M971 50 H977.5 V56.5" fill="none" stroke="#333" stroke-width="1.6"/><path d="M962 60.5 l3.5 3.5 M976 52 l-3 3" stroke="#333"/>
<path d="M988.8 45 V71" stroke="#cccccc" stroke-width="1.5"/>
<path d="M999 65 L1015 50" stroke="#4a66a8" stroke-width="1"/><path d="M1007 57.5 L1016 66" stroke="#333" stroke-width="1.9"/><circle cx="1007" cy="57.5" r="2.2" fill="#333"/>
<circle cx="1042" cy="57.8" r="7.6" fill="none" stroke="#4a66a8" stroke-width="1.2"/><circle cx="1042" cy="57.8" r="4.6" fill="none" stroke="#333" stroke-width="2"/>
<path d="M1068 53.5 L1078 63.5" stroke="#333" stroke-width="1.9"/><path d="M1071 50.5 L1083 62.5" stroke="#4a66a8" stroke-width="1"/>
<path d="M1101.5 65 L1117 50" stroke="#333" stroke-width="1.9"/><circle cx="1112.5" cy="60.5" r="4.6" fill="none" stroke="#4a66a8" stroke-width="1"/>
<path d="M1136 57.8 H1152" stroke="#333" stroke-width="1.9"/><path d="M1177.8 50.5 V65.8" stroke="#333" stroke-width="1.9"/>
<path d="M1203.5 65 H1221" stroke="#333" stroke-width="1.9"/><path d="M1211.5 50.5 V64 M1211.5 58.5 H1216.5 V64" fill="none" stroke="#4a66a8" stroke-width="1"/>
<path d="M1241 55.3 H1251 M1241 60.3 H1251" stroke="#333" stroke-width="1.9"/>
<path d="M1271 58.5 H1275 M1284 58.5 H1288" stroke="#4a66a8" stroke-width="1"/><circle cx="1279.8" cy="58.5" r="2.4" fill="#333"/>
<path d="M1306.5 56.5 Q1312 57 1316 65.5" fill="none" stroke="#4a66a8" stroke-width="1"/><path d="M1314 58.5 L1320.8 50.5" stroke="#333" stroke-width="1.9"/>
<path d="M1340 50 Q1341 62 1352 65.5" fill="none" stroke="#4a66a8" stroke-width="1"/><path d="M1346 61.5 L1352 51.5 Q1353 50 1355 50.5" fill="none" stroke="#333" stroke-width="1.9"/><circle cx="1346" cy="61.5" r="2" fill="#333"/>
<path d="M1382 50.5 H1374 L1379.5 57.5 L1374 65 H1382" fill="none" stroke="#333" stroke-width="1.6"/><path d="M1382 49.5 V66" stroke="#333" stroke-width="1" stroke-dasharray="2 1.5"/><path d="M1384 50.5 H1390 L1385.5 57.5 L1390 65 H1384" fill="none" stroke="#4a66a8" stroke-width="1.2"/>
<path d="M1407.5 56.5 H1424" stroke="#4a66a8" stroke-width="2.2"/><path d="M1408.5 59.5 l2-2 M1411.5 59.5 l2-2 M1414.5 59.5 l2-2 M1417.5 59.5 l2-2 M1420.5 59.5 l2-2" stroke="#333" stroke-width="0.9"/>
<path d="M1442.5 65.5 Q1443 53 1450.5 52 Q1457.5 53 1458 65.5" fill="none" stroke="#333" stroke-width="1.9"/><path d="M1442.5 65.5 Q1443 56 1447 53.5" fill="none" stroke="#4a66a8" stroke-width="1.9"/><path d="M1450.5 49 V51 M1446 50 l0.8 1.8 M1455 50 l-0.8 1.8 M1442.5 53 l1.5 1.2 M1458.5 53 l-1.5 1.2 M1440.5 57.5 l2 0.5 M1460.5 57.5 l-2 0.5 M1440 62 h2 M1461 62 h-2" stroke="#555" stroke-width="0.8"/>
<rect x="1478.3" y="42.2" width="160.6" height="31.4" rx="4" fill="#eeeeee"/>
<text x="1488.6" y="62.9" font-size="14.5" fill="#333" textLength="85.7" lengthAdjust="spacingAndGlyphs">Search tools...</text>
<rect x="1578.8" y="49.8" width="32.4" height="18.2" rx="2" fill="#f4f4f4" stroke="#aaa" stroke-width="0.9"/><rect x="1612.8" y="49.8" width="15.7" height="18.2" rx="2" fill="#f4f4f4" stroke="#aaa" stroke-width="0.9"/>
<text x="1581.5" y="63.5" font-size="11.5" fill="#333" textLength="17" lengthAdjust="spacingAndGlyphs">alt/</text>
<path d="M1599.5 57 H1602.3 L1605.5 63 H1608.5 M1604.5 57 H1608.5" fill="none" stroke="#333" stroke-width="1.1"/>
<text x="1620.7" y="63.5" font-size="11" fill="#333" text-anchor="middle">c</text>
<path d="M40 77 H245.5" stroke="#d0d0d0" stroke-width="1"/>
<path d="M16 84.5 V89.5 M16 97.5 V102.5" stroke="#333" stroke-width="1.7" stroke-dasharray="1.7 1.5"/><circle cx="16" cy="93.3" r="3.1" fill="#333"/><path d="M21.5 98.3 H29.5 M25.5 94.3 V102.3" stroke="#1e5bb8" stroke-width="2"/>
<ellipse cx="20.3" cy="125.8" rx="9.5" ry="5.8" fill="#333"/><path d="M14.5 129.5 L12.5 135.5 L19.5 131" fill="#333"/>
<path d="M26.5 160 V171 H13 V154.5 H26.5 V157" fill="none" stroke="#333" stroke-width="1.7"/><path d="M15.5 158 H23 M15.5 161.5 H22 M15.5 165 H19.5" stroke="#333" stroke-width="1.4"/><path d="M20 168 L28.5 157.5" stroke="#333" stroke-width="2.6"/>
<circle cx="21" cy="198.8" r="6.8" fill="none" stroke="#333" stroke-width="1.8"/><path d="M18.5 190 H23.5 M21 190 V192 M21 198.8 L24 195" stroke="#333" stroke-width="1.6"/><path d="M11 196.5 H14 M10.5 200 H14 M12 203.5 H15.5" stroke="#333" stroke-width="1.2"/>
<path d="M0 216.5 H40" stroke="#dcdcdc"/>
<rect x="12.8" y="225.8" width="14.6" height="17" rx="1.5" fill="none" stroke="#333" stroke-width="1.8"/><path d="M15.3 230 l1.5 1.5 l2 -2.5 M15.3 234.5 l1.5 1.5 l2 -2.5 M15.3 239 l1.5 1.5 l2 -2.5" fill="none" stroke="#333" stroke-width="1"/><path d="M20.5 230.5 H25 M20.5 235 H25 M20.5 239.5 H25" stroke="#333" stroke-width="1.6"/>
<rect x="11.2" y="1059.3" width="17.8" height="8.2" fill="#2a2a2a"/><circle cx="21.6" cy="1066.7" r="5.6" fill="#f9f9f9"/><circle cx="21.6" cy="1066.7" r="3.8" fill="#f9f9f9" stroke="#222" stroke-width="1.8"/><path d="M24.4 1069.6 L28 1073.4" stroke="#222" stroke-width="2.2"/>
<rect x="40" y="77.5" width="205" height="972.5" fill="#ffffff"/>
<path d="M39.5 77 V1050 M245.5 77 V1050" stroke="#d4d4d4" stroke-width="1"/>
<path d="M51 93.5 H66 L60.5 100.5 V107.5 L56.5 105.5 V100.5 Z" fill="none" stroke="#333" stroke-width="1.3" stroke-linejoin="round"/>
<rect x="79.5" y="84.5" width="157" height="29" rx="3" fill="#fff" stroke="#9b9b9b" stroke-width="1"/>
<text x="86" y="105.2" font-size="13.8" fill="#8a8a8a" font-style="italic" textLength="123.3" lengthAdjust="spacingAndGlyphs">Filter by name or type</text>
<text x="44.4" y="135.1" font-size="13.5" fill="#333" font-weight="bold" textLength="80" lengthAdjust="spacingAndGlyphs">Features (20)</text>
<path d="M146 136.5 V124.5 H151.5 L153 126.3 H163.5 V136.5 Z" fill="none" stroke="#999" stroke-width="1" stroke-dasharray="none"/><path d="M148 130.5 H154.5 M151.2 127.3 V133.8" stroke="#5b7fc8" stroke-width="1.5"/>
<rect x="178.8" y="123.2" width="3.5" height="13.3" fill="#888"/><rect x="187.8" y="123.2" width="3.5" height="13.3" fill="#888"/>
<circle cx="215" cy="130.8" r="6.5" fill="none" stroke="#333" stroke-width="1.6"/><path d="M213 121.8 H217.5 M215 122 V124 M215 130.8 L218 134" stroke="#333" stroke-width="1.5"/>
<path d="M45 154.2 L50 159.3 L55 154.2" fill="none" stroke="#555" stroke-width="1.8"/>
<text x="63.6" y="162" font-size="13.8" fill="#333" textLength="100.8" lengthAdjust="spacingAndGlyphs">Default geometry</text>
<path d="M49.5 170 V272.5 H55" fill="none" stroke="#ccc" stroke-width="1"/>
<circle cx="72.3" cy="182.7" r="3.2" fill="none" stroke="#777" stroke-width="1"/><circle cx="72.3" cy="182.7" r="1.5" fill="#777"/>
<text x="85.4" y="188" font-size="13.8" fill="#333" textLength="34" lengthAdjust="spacingAndGlyphs">Origin</text>
<path d="M65.5 201.5 L79.5 203.5 V216.5 L65.5 214.5 Z" fill="#f0f0f0" stroke="#bbb" stroke-width="1.1"/><path d="M73.5 202.5 V210.5 L79.5 211.5" fill="none" stroke="#bbb" stroke-width="1.1"/>
<text x="85.4" y="214" font-size="13.8" fill="#a8a8a8" textLength="21.6" lengthAdjust="spacingAndGlyphs">Top</text>
<path d="M65.5 227.5 L79.5 229.5 V242.5 L65.5 240.5 Z" fill="#f0f0f0" stroke="#bbb" stroke-width="1.1"/><path d="M73.5 228.5 V236.5 L79.5 237.5" fill="none" stroke="#bbb" stroke-width="1.1"/>
<text x="85.4" y="240" font-size="13.8" fill="#a8a8a8" textLength="31.5" lengthAdjust="spacingAndGlyphs">Front</text>
<path d="M65.5 253.5 L79.5 255.5 V268.5 L65.5 266.5 Z" fill="#f0f0f0" stroke="#bbb" stroke-width="1.1"/><path d="M73.5 254.5 V262.5 L79.5 263.5" fill="none" stroke="#bbb" stroke-width="1.1"/>
<text x="85.4" y="266" font-size="13.8" fill="#a8a8a8" textLength="30" lengthAdjust="spacingAndGlyphs">Right</text>
<path d="M45 284.2 L50 289.3 L55 284.2" fill="none" stroke="#555" stroke-width="1.8"/>
<g fill="none" stroke="#666" stroke-width="1.2"><path d="M73 278 L80 281 V289.5 L73 293 L66 289.5 V281 Z"/><path d="M66 281 L73 284.5 L80 281 M73 284.5 V293"/></g>
<path d="M73.2 284.5 L80 281 V289.5 L73.2 293 Z" fill="#ddd"/>
<text x="86.5" y="292" font-size="13.8" fill="#333" textLength="67" lengthAdjust="spacingAndGlyphs">Origin Cube</text>
<path d="M200 279 V295" stroke="#222" stroke-width="1.6" stroke-dasharray="1.6 1.5"/><circle cx="200" cy="287" r="2.8" fill="#222"/>
<rect x="59" y="300" width="181" height="25" fill="#f3f3f3"/>
<path d="M49.5 300 V324 H55" fill="none" stroke="#ccc" stroke-width="1"/>
<circle cx="72.5" cy="312.8" r="7.2" fill="none" stroke="#aaa" stroke-width="1.1"/><circle cx="72.5" cy="312.8" r="5" fill="none" stroke="#aaa" stroke-width="1"/><path d="M72.5 308 V313 H77" fill="none" stroke="#aaa" stroke-width="1"/>
<text x="86" y="318" font-size="13.8" fill="#a8a8a8" textLength="99.6" lengthAdjust="spacingAndGlyphs">Mate connector 1</text>
<path d="M46.5 345.5 L56 333 L59 335.5 L49.5 345 Z M46 346.5 H61" fill="none" stroke="#aaa" stroke-width="1.1"/>
<text x="66" y="344" font-size="13.8" fill="#a8a8a8" textLength="82.7" lengthAdjust="spacingAndGlyphs">Layout Sketch</text>
<path d="M47.5 360 L52.5 365 L47.5 370" fill="none" stroke="#555" stroke-width="1.8"/>
<path d="M66 370.5 V358.5 H71.5 L73 360.5 H81.5 V370.5 Z" fill="none" stroke="#777" stroke-width="1.2"/>
<text x="86.5" y="370" font-size="13.8" fill="#333" textLength="47.2" lengthAdjust="spacingAndGlyphs">Tube (3)</text>
<rect x="40" y="379" width="200" height="23.3" fill="#eceef0"/>
<path d="M40 402.8 H240" stroke="#8cc6ea" stroke-width="1.2"/>
<path d="M45 388.2 L50 393.3 L55 388.2" fill="none" stroke="#555" stroke-width="1.8"/>
<path d="M66 396.5 V384.5 H71.5 L73 386.5 H81.5 V396.5 Z" fill="none" stroke="#777" stroke-width="1.2"/>
<text x="86.5" y="396" font-size="13.8" fill="#333" textLength="48.7" lengthAdjust="spacingAndGlyphs">Plate (3)</text>
<rect x="40" y="405.1" width="200" height="23.2" fill="#b3daf3"/>
<path d="M66.5 423.5 L76 411 L79 413.5 L69.5 423 Z M66 424.5 H81" fill="none" stroke="#6f8da5" stroke-width="1.1"/>
<text x="85.7" y="422" font-size="13.8" fill="#6d8aa3" font-weight="bold" textLength="77" lengthAdjust="spacingAndGlyphs">Plate Sketch</text>
<path d="M49.5 429 V483 H55" fill="none" stroke="#ccc" stroke-width="1"/>
<g fill="none" stroke="#aaa" stroke-width="1"><rect x="65.5" y="435.5" width="14" height="14" rx="1.5"/><rect x="68" y="438" width="11.5" height="11.5" fill="#ccc"/><rect x="71" y="441" width="8.5" height="8.5" fill="#aaa"/></g>
<text x="86" y="448" font-size="13.8" fill="#a0a0a0" font-style="italic" textLength="79" lengthAdjust="spacingAndGlyphs">Plate Extrude</text>
<g fill="none" stroke="#aaa" stroke-width="1.1"><path d="M65.5 462 H69.5 V472 H72 V475.5 H65.5 Z" fill="#eee"/><path d="M74 461.5 V475.5" stroke-dasharray="1.5 1"/><path d="M80 462 V475.5 H76 V472 H78" fill="#ccc"/></g>
<text x="86" y="474" font-size="13.8" fill="#a0a0a0" font-style="italic" textLength="70" lengthAdjust="spacingAndGlyphs">Plate Mirror</text>
<path d="M47.5 490 L52.5 495 L47.5 500" fill="none" stroke="#555" stroke-width="1.8"/>
<path d="M66 500.5 V488.5 H71.5 L73 490.5 H81.5 V500.5 Z" fill="none" stroke="#777" stroke-width="1.2"/>
<text x="86.3" y="500" font-size="13.8" fill="#333" textLength="71.3" lengthAdjust="spacingAndGlyphs">2x1 Tube (2)</text>
<path d="M47.5 516 L52.5 521 L47.5 526" fill="none" stroke="#555" stroke-width="1.8"/>
<path d="M66 526.5 V514.5 H71.5 L73 516.5 H81.5 V526.5 Z" fill="none" stroke="#777" stroke-width="1.2"/>
<text x="86.3" y="526" font-size="13.8" fill="#333" textLength="103.5" lengthAdjust="spacingAndGlyphs">Polycarb Floor (2)</text>
<g fill="none" stroke="#bbb" stroke-width="1.1"><ellipse cx="51.5" cy="544" rx="4.5" ry="3.5" transform="rotate(30 51.5 544)"/><circle cx="57.5" cy="549.5" r="2.8"/></g>
<text x="66.8" y="552" font-size="13.8" fill="#a8a8a8" font-style="italic" textLength="115.2" lengthAdjust="spacingAndGlyphs">Feeeder Wheel Belt</text>
<path d="M200 539 V555" stroke="#222" stroke-width="1.6" stroke-dasharray="1.6 1.5"/><circle cx="200" cy="547" r="2.8" fill="#222"/>
<rect x="46" y="567.5" width="15.5" height="10" rx="2" fill="#999"/><circle cx="50.5" cy="572.5" r="2.3" fill="#fff"/><circle cx="56.5" cy="572.5" r="2.3" fill="#fff"/><path d="M49 564 V567 M58 564 V567" stroke="#999" stroke-width="1.5"/>
<text x="66.8" y="578" font-size="13.8" fill="#a8a8a8" font-style="italic" textLength="115.2" lengthAdjust="spacingAndGlyphs">Feeder Wheel Shaft</text>
<path d="M200 565 V581" stroke="#222" stroke-width="1.6" stroke-dasharray="1.6 1.5"/><circle cx="200" cy="573" r="2.8" fill="#222"/>
<path d="M47.5 594 L52.5 599 L47.5 604" fill="none" stroke="#555" stroke-width="1.8"/>
<path d="M66 604.5 V592.5 H71.5 L73 594.5 H81.5 V604.5 Z" fill="none" stroke="#777" stroke-width="1.2"/>
<text x="86.3" y="604" font-size="13.8" fill="#333" textLength="75.5" lengthAdjust="spacingAndGlyphs">Pocketing (2)</text>
<rect x="44.9" y="622.2" width="190.1" height="6.2" fill="#aaaaaa"/>
<path d="M40 705.5 H240" stroke="#d6d6d6" stroke-width="1"/>
<path d="M45 716.2 L50 721.3 L55 716.2" fill="none" stroke="#555" stroke-width="1.8"/>
<text x="63.7" y="724.1" font-size="13.8" fill="#333" textLength="50" lengthAdjust="spacingAndGlyphs">Parts (2)</text>
<path d="M65 745 L68 742.5 H72 V738.5 L74.5 737 H78 L79.5 738.5 V750 H68 L65 748 Z M68 748 V745 H72.5 M72 742.5 L74.5 740 H78 L79.5 738.5 M78 740 V750 M72.5 745 L74.5 742.5" fill="none" stroke="#777" stroke-width="1"/>
<text x="85" y="750" font-size="13.8" fill="#333" textLength="67.5" lengthAdjust="spacingAndGlyphs">Origin Cube</text>
<path d="M65 771 L68 768.5 H72 V764.5 L74.5 763 H78 L79.5 764.5 V776 H68 L65 774 Z M68 774 V771 H72.5 M72 768.5 L74.5 766 H78 L79.5 764.5 M78 766 V776 M72.5 771 L74.5 768.5" fill="none" stroke="#777" stroke-width="1"/>
<text x="85" y="776" font-size="13.8" fill="#333" textLength="88" lengthAdjust="spacingAndGlyphs">Tube 1&quot;x1&quot;x12&quot;</text>
<path d="M245.5 538.5 H277.4 V571.6 H245.5" fill="#fff" stroke="#d0d0d0" stroke-width="1"/>
<path d="M255.5 553 V566 M258.5 549 H270 M258.5 554.5 H270 M258.5 560 H270 M258.5 565.5 H270 M254 549 l1.5 1.5 l1.5 -1.5" fill="none" stroke="#333" stroke-width="1.3"/>
<defs><filter id="sh" x="-20%" y="-20%" width="140%" height="140%"><feGaussianBlur in="SourceAlpha" stdDeviation="4.5"/><feOffset dx="-1" dy="5"/><feComponentTransfer><feFuncA type="linear" slope="0.32"/></feComponentTransfer><feMerge><feMergeNode/><feMergeNode in="SourceGraphic"/></feMerge></filter></defs>
<rect x="322" y="78.7" width="220.2" height="220.3" fill="#ffffff" filter="url(#sh)"/>
<text x="328.5" y="97.7" font-size="13" fill="#333" font-weight="bold" textLength="73.5" lengthAdjust="spacingAndGlyphs">Plate Sketch</text>
<rect x="486" y="79" width="28" height="27.8" fill="#079b07"/>
<path d="M492.5 93 L498 98.5 L507.5 88.5" fill="none" stroke="#fff" stroke-width="2.8"/>
<path d="M523 89 L533 99 M533 89 L523 99" stroke="#c9303e" stroke-width="2.6"/>
<path d="M322 107.5 H542" stroke="#dddddd" stroke-width="1"/>
<rect x="325.9" y="114.1" width="186" height="42" rx="2" fill="#fff" stroke="#cccccc" stroke-width="1"/>
<text x="331.3" y="127.9" font-size="10" fill="#555" textLength="57.7" lengthAdjust="spacingAndGlyphs">Sketch plane</text>
<text x="331.9" y="149.7" font-size="13.6" fill="#555" textLength="124" lengthAdjust="spacingAndGlyphs">Face of Tube Extrude</text>
<path d="M493 141.5 L500.5 149 M500.5 141.5 L493 149" stroke="#555" stroke-width="1.2"/>
<circle cx="526.2" cy="125.2" r="8" fill="none" stroke="#444" stroke-width="1.1"/><circle cx="526.2" cy="125.2" r="6" fill="none" stroke="#444" stroke-width="1"/><path d="M526.2 119.5 V125.2 H532" fill="none" stroke="#444" stroke-width="1.1"/>
<rect x="326.6" y="170.6" width="11" height="11" rx="2" fill="#fff" stroke="#666" stroke-width="1"/>
<text x="342.5" y="181.1" font-size="13.6" fill="#555" textLength="106" lengthAdjust="spacingAndGlyphs">Disable imprinting</text>
<rect x="326.6" y="197.6" width="11" height="11" rx="2" fill="#fff" stroke="#666" stroke-width="1"/>
<text x="342.5" y="208.1" font-size="13.6" fill="#555" textLength="100" lengthAdjust="spacingAndGlyphs">Show constraints</text>
<rect x="326.1" y="224.1" width="12" height="12" rx="2" fill="#1b4fb3"/>
<path d="M328.8 230.29999999999998 L331.2 232.79999999999998 L335.5 227.79999999999998" fill="none" stroke="#fff" stroke-width="1.6"/>
<text x="342.5" y="235.1" font-size="13.6" fill="#555" textLength="105" lengthAdjust="spacingAndGlyphs">Show expressions</text>
<rect x="326.1" y="251.1" width="12" height="12" rx="2" fill="#1b4fb3"/>
<path d="M328.8 257.3 L331.2 259.8 L335.5 254.79999999999998" fill="none" stroke="#fff" stroke-width="1.6"/>
<text x="342.5" y="262.1" font-size="13.6" fill="#555" textLength="71" lengthAdjust="spacingAndGlyphs">Show errors</text>
<rect x="441.5" y="274.5" width="21" height="21" rx="2.5" fill="#fff" stroke="#999" stroke-width="1"/>
<circle cx="451.8" cy="284.8" r="7.2" fill="none" stroke="#222" stroke-width="1.3"/><path d="M447.5 289.5 L448.3 286 L454.5 279.5 L456.8 281.8 L450.5 288.3 Z" fill="none" stroke="#222" stroke-width="1"/><path d="M446 289.8 H456" stroke="#3a5cb0" stroke-width="1"/><path d="M456.5 289.5 L459.3 292.5" stroke="#222" stroke-width="1.8"/>
<rect x="467.5" y="274.5" width="48" height="21" rx="2.5" fill="#fff" stroke="#999" stroke-width="1"/>
<text x="478.8" y="289.6" font-size="13" fill="#333" textLength="25.6" lengthAdjust="spacingAndGlyphs">Final</text>
<circle cx="530.9" cy="288.2" r="6" fill="#a8a8a8"/>
<text x="530.9" y="292.2" font-size="9.5" fill="#fff" font-weight="bold" text-anchor="middle">?</text>
<path d="M1825 100 L1830 94 L1835 100 Z" fill="#e2e4e7"/>
<path d="M1808 102 Q1790 107 1781 119" fill="none" stroke="#e2e4e7" stroke-width="4.5"/><path d="M1776.5 113 L1777.5 124 L1786 121 Z" fill="#e2e4e7"/>
<path d="M1852 102 Q1870 107 1879 119" fill="none" stroke="#e2e4e7" stroke-width="4.5"/><path d="M1883.5 113 L1882.5 124 L1874 121 Z" fill="#e2e4e7"/>
<path d="M1765 161 L1756 166 L1765 171 Z M1895 161 L1904 166 L1895 171 Z M1825 232 L1830 239 L1835 232 Z" fill="#e2e4e7"/>
<path d="M1812 137.6 H1848.3 A10.2 10.2 0 0 0 1858.5 147.8 V183.2 A10.2 10.2 0 0 0 1848.3 193.4 H1812 A10.2 10.2 0 0 0 1801.8 183.2 V147.8 A10.2 10.2 0 0 0 1812 137.6 Z" fill="#e2e4e7"/>
<rect x="1807.8" y="143.6" width="44.8" height="43.8" rx="11" fill="#fdfdfd"/>
<text x="1830.2" y="169" font-size="13" fill="#111" text-anchor="middle" textLength="27" lengthAdjust="spacingAndGlyphs">Right</text>
<path d="M1799.3 137.6 V196.4" fill="none" stroke="#30309c" stroke-width="1.4"/><path d="M1799.3 196.4 H1858.8" stroke="#3cb043" stroke-width="1.5"/>
<text x="1799.2" y="131.5" font-size="11" fill="#4a4ac8" text-anchor="middle">Z</text>
<text x="1868.5" y="200" font-size="11" fill="#2db22d" text-anchor="middle">Y</text>
<path d="M1875 223 L1884 226.5 V238 L1875 241.5 L1866 238 V226.5 Z" fill="#fff" stroke="#333" stroke-width="1"/><path d="M1866.5 227 L1875 230.3 V241 L1866.5 237.7 Z" fill="#8c8c8c"/><path d="M1875 230.3 L1883.5 227 V237.7 L1875 241 Z" fill="#cfcfcf"/><path d="M1866 226.5 L1875 230 L1884 226.5 M1875 230 V241.5" fill="none" stroke="#333" stroke-width="0.9"/>
<path d="M1891.8 229.8 H1900 L1895.9 233.5 Z" fill="#333"/>
<rect x="1888.5" y="433.5" width="40" height="131.5" fill="#fff" stroke="#c8c8c8" stroke-width="1"/>
<path d="M1888.5 466.3 H1919 M1888.5 499.5 H1919 M1888.5 532.5 H1919" stroke="#c8c8c8"/>
<rect x="1888.5" y="576.3" width="40" height="98.7" fill="#fff" stroke="#c8c8c8" stroke-width="1"/>
<path d="M1888.5 609.3 H1919 M1888.5 642 H1919" stroke="#c8c8c8"/>
<path d="M1897 457 L1905 442 L1909 444 L1901 457 Z" fill="#777"/><path d="M1899 457 L1909 445 L1913 448 L1903 457 Z" fill="#999"/><path d="M1901 457 L1912 449 L1915 453 L1906 457 Z" fill="#bbb"/><rect x="1895.5" y="454.5" width="19.5" height="6" rx="1.5" fill="#fff" stroke="#666" stroke-width="0.9"/><rect x="1909" y="455" width="5.5" height="5" fill="#ccc"/><circle cx="1898.8" cy="457.5" r="1.3" fill="#444"/>
<g fill="none" stroke="#222" stroke-width="1.1"><path d="M1906 477 L1914 480.5 V489 L1906 492.5 L1898.5 489 V480.5 Z M1898.5 480.5 L1906 484 L1914 480.5 M1906 484 V492.5"/></g><rect x="1895" y="473.5" width="10" height="8" fill="#2a5bd0"/><path d="M1895 476.2 H1905 M1895 478.9 H1905 M1898.3 473.5 V481.5 M1901.6 473.5 V481.5" stroke="#fff" stroke-width="0.8"/>
<g fill="none" stroke="#222" stroke-width="1"><path d="M1906 511 L1912 513.5 V520 L1906 522.5 L1900 520 V513.5 Z M1900 513.5 L1906 516 L1912 513.5 M1906 516 V522.5"/><path d="M1898.5 512 Q1897 512 1897 513.5 V516.5 L1896 517.5 L1897 518.5 V523 Q1897 524.5 1898.5 524.5 M1913.5 510 Q1915 510 1915 511.5 V515.5 L1916 516.5 L1915 517.5 V522 Q1915 523.5 1913.5 523.5"/></g><rect x="1895" y="506.5" width="9" height="7.5" fill="#333"/><path d="M1895 509 H1904 M1895 511.5 H1904 M1898 506.5 V514 M1901 506.5 V514" stroke="#fff" stroke-width="0.7"/>
<rect x="1895" y="539.5" width="9.5" height="8" fill="#333"/><path d="M1895 542.2 H1904.5 M1895 544.9 H1904.5 M1898.2 539.5 V547.5 M1901.4 539.5 V547.5" stroke="#fff" stroke-width="0.7"/><path d="M1896.5 548 Q1894.5 552 1896.5 556.5 M1913.5 543 Q1916 549.5 1913.5 556" fill="none" stroke="#222" stroke-width="1.6"/><path d="M1900 547.5 Q1903 545 1905 549 L1907 553 Q1909 556 1911.5 553.5 M1910.5 546.5 Q1907 547 1905.5 551 L1904 554.5 Q1902.5 556.5 1900.5 555" fill="none" stroke="#222" stroke-width="1.6"/>
<rect x="1893" y="578.5" width="24.5" height="28" rx="3" fill="#ddd"/><rect x="1895.5" y="587" width="20" height="14" rx="3" fill="#333"/><circle cx="1901" cy="594" r="3" fill="#8ab4e8"/><circle cx="1910" cy="594" r="3" fill="#8ab4e8"/><path d="M1898 583 H1913" stroke="#3a62b0" stroke-width="1.5" stroke-dasharray="2 1.5"/>
<rect x="1893" y="612" width="24.5" height="28" rx="1.5" fill="#ddd"/><rect x="1894.5" y="614" width="21.5" height="24" fill="#4cae50"/><path d="M1897.5 619 H1904.5 V633 H1897.5 Z M1906.5 619 H1913 V633 H1906.5 Z" fill="#fff"/>
<rect x="1893" y="645" width="24.5" height="28" rx="1.5" fill="#ddd"/><rect x="1894.5" y="647" width="21.5" height="24" fill="#1d5ad2" stroke="#111" stroke-width="1"/><path d="M1897.5 652 H1904.5 V666 H1897.5 Z M1906.5 652 H1913 V666 H1906.5 Z" fill="#fff"/>
<text x="1704.5" y="1042" font-size="13.5" fill="#666" textLength="43.8" lengthAdjust="spacingAndGlyphs">Length:</text>
<text x="1751.5" y="1040.3" font-size="12.5" fill="#606060" font-weight="bold" style="font-family:Liberation Mono" textLength="41.5" lengthAdjust="spacingAndGlyphs">22.956</text>
<path d="M1751.5 1043.8 H1793.5" stroke="#c4c4c4" stroke-width="0.9"/>
<text x="1795.5" y="1042" font-size="13.5" fill="#666" textLength="10.5" lengthAdjust="spacingAndGlyphs">in</text>
<g fill="none" stroke="#333" stroke-width="1.2"><ellipse cx="1832.5" cy="1035" rx="4.8" ry="3.6"/><ellipse cx="1832.5" cy="1034.6" rx="2" ry="1.3"/><path d="M1837.3 1035 V1039 Q1837 1042 1833 1042 H1822.5 V1038.5 H1829"/></g><path d="M1824.5 1040.3 v1.2 M1826.5 1040.3 v1.2 M1828.5 1040.3 v1.2 M1830.5 1040.3 v1.2" stroke="#333" stroke-width="0.7"/>
<g fill="none" stroke="#333" stroke-width="1.4"><path d="M1855.6 1042.3 V1040 A9.9 9.6 0 0 1 1875.4 1040 V1042.3 Z"/><path d="M1860 1042 A5.5 4.5 0 0 1 1871 1042"/></g>
<g fill="none" stroke="#333" stroke-width="1.3"><path d="M1893.5 1043 H1907 M1900.2 1030 V1042.5 M1894.8 1031.8 H1905.6"/><path d="M1894.8 1031.8 L1893 1037.5 H1897 Z M1905.6 1031.8 L1903.8 1037.5 H1907.6 Z" stroke-width="1"/></g><path d="M1893.5 1041.3 H1907" stroke="#333" stroke-width="1"/>
<rect x="40" y="1050" width="1879" height="29" fill="#d7d7d7"/>
<path d="M49 1064.5 H64 M56.5 1057 V1072" stroke="#555" stroke-width="2.4"/>
<path d="M73.8 1050.5 H109 L116 1064 L109 1077 H73.8 Z" fill="#e6e6e6"/>
<path d="M82.7 1062 L91.8 1053.5 L100.5 1062 V1071 H95.5 V1065 H88 V1071 H82.7 Z" fill="#5e5e5e"/><rect x="96" y="1054" width="3" height="6" fill="#5e5e5e"/>
<path d="M108 1050.5 H238 L245.5 1064 L238 1077 H108 L115.5 1064 Z" fill="#ffffff"/>
<text x="130.8" y="1067.8" font-size="14.8" fill="#555" textLength="92.8" lengthAdjust="spacingAndGlyphs">Exercise 1: Flat</text>
<path d="M246.8 1050.5 H447.3 V1077 H246.8 L253 1064 Z" fill="#e6e6e6"/>
<circle cx="266.8" cy="1062.2" r="6.7" fill="#6d9fd8"/><circle cx="266.8" cy="1062.5" r="2" fill="#fff"/><path d="M266.8 1057 V1058.6 M266.8 1066 V1067.6" stroke="#fff" stroke-width="1.6"/>
<path d="M278.5 1054.5 H292.5 L295.5 1057.5 V1071.5 H281.5 L278.5 1068.5 Z" fill="#fff" stroke="#111" stroke-width="1.1"/><path d="M279 1055 H290 V1066.5 H281.5 L279 1064 Z" fill="#999"/><path d="M279 1055 L281.8 1057.5 H290.5 M281.8 1057.5 V1066.5" fill="none" stroke="#555" stroke-width="0.8"/>
<text x="300.6" y="1068.7" font-size="14.8" fill="#777" textLength="126" lengthAdjust="spacingAndGlyphs">Exercise 1 Assembly</text>
<rect x="449" y="1050.5" width="199.5" height="26.5" fill="#ffffff"/>
<path d="M449 1076.8 H648.5" stroke="#1c4fb0" stroke-width="2.4"/>
<g fill="#fff" stroke="#222" stroke-width="1.1" stroke-linejoin="round"><path d="M461.5 1058.5 H467 L469.2 1060.8 V1071.3 H463.8 L461.5 1069 Z"/><path d="M469.3 1054.5 H475.5 L477.7 1056.8 V1071.3 H471.5 L469.3 1069 Z"/></g><path d="M464 1061 V1071 M472 1057 V1071" stroke="#999" stroke-width="0.8"/>
<text x="482.7" y="1068.7" font-size="14.8" fill="#333" textLength="133.8" lengthAdjust="spacingAndGlyphs">Exercise 1 Part Studio</text>
</svg>
</body></html>
